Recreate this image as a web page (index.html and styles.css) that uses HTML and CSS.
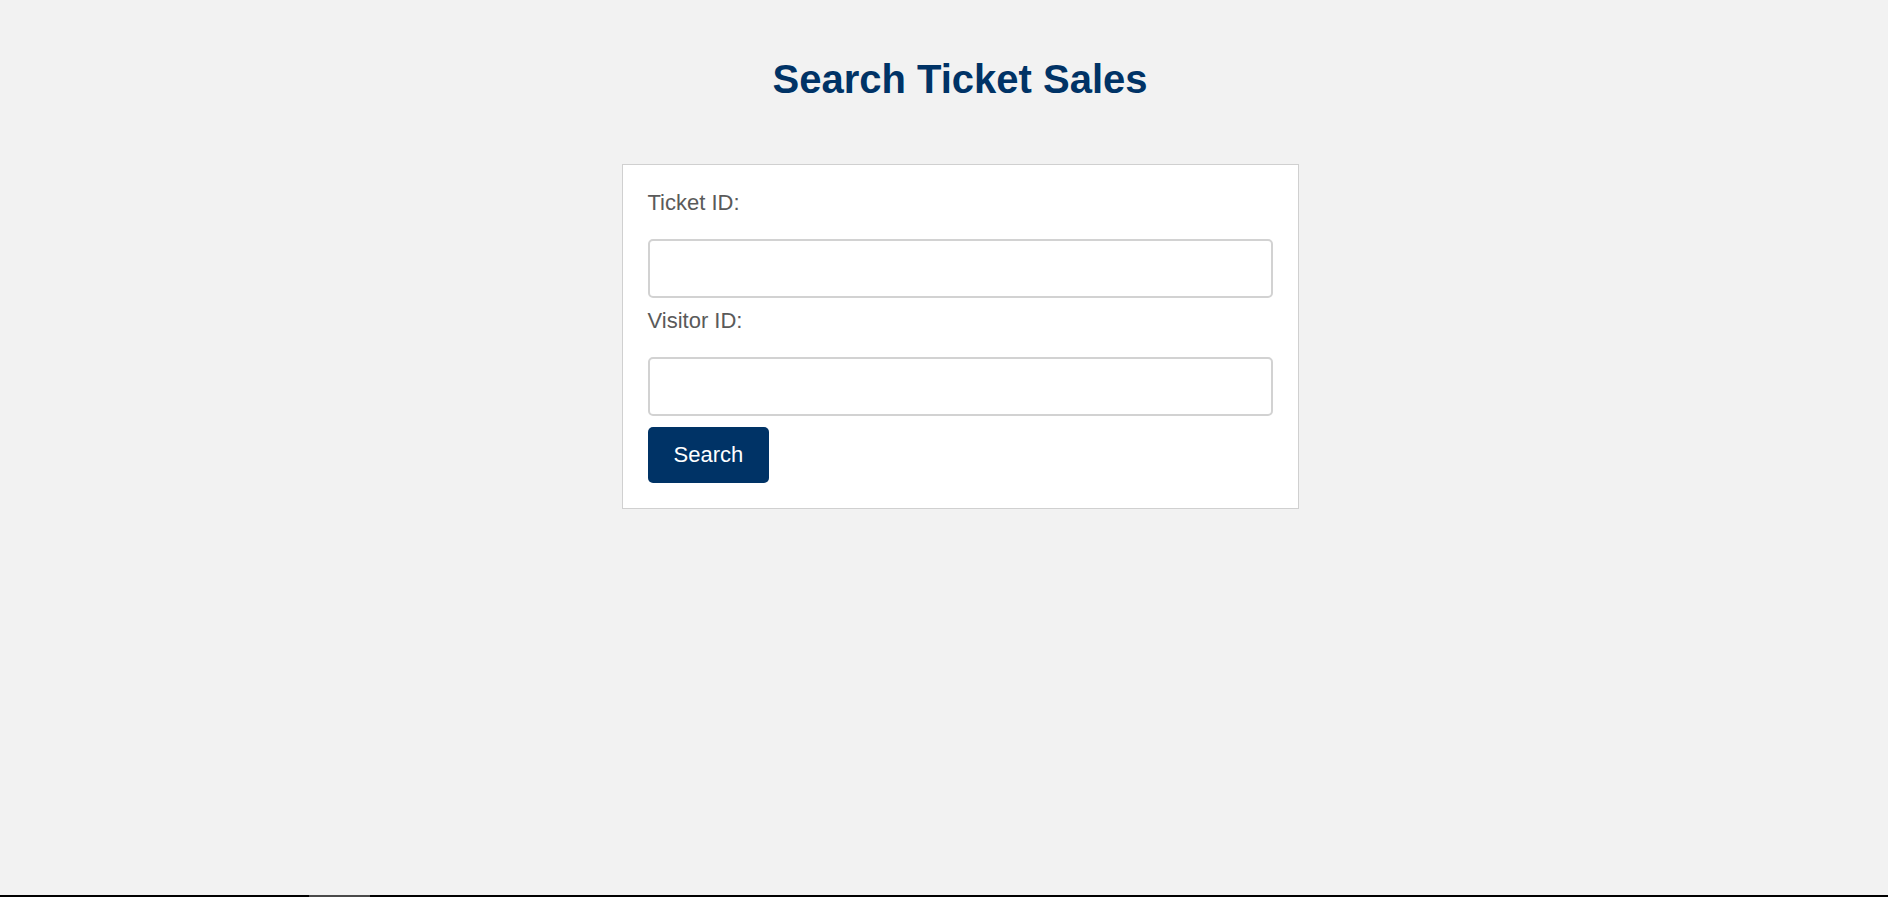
FILE: index.html
```html
<!DOCTYPE html>
<html lang="en">
<head>
<meta charset="utf-8">
<title>Search Ticket Sales</title>
<link rel="stylesheet" href="styles.css">
</head>
<body>
<main class="page">
  <h1 class="title">Search Ticket Sales</h1>
  <form class="card">
    <label class="field-label" for="ticket">Ticket ID:</label>
    <input class="field-input" id="ticket" type="text">
    <label class="field-label" for="visitor">Visitor ID:</label>
    <input class="field-input field-input-last" id="visitor" type="text">
    <button class="search-btn" type="button">Search</button>
  </form>
</main>
<div class="hscroll"><div class="hscroll-thumb"></div></div>
</body>
</html>
```
FILE: styles.css
```css
html, body {
  margin: 0;
  padding: 0;
}
body {
  background: #f2f2f2;
  font-family: "Liberation Sans", Arial, sans-serif;
  min-height: 897px;
}
.page {
  display: flex;
  flex-direction: column;
  align-items: center;
  padding: 56px 0 0 32px;
}
.title {
  margin: 0;
  font-size: 40px;
  line-height: 46px;
  font-weight: bold;
  color: #003366;
}
.card {
  margin-top: 62px;
  box-sizing: border-box;
  width: 677px;
  background: #ffffff;
  border: 1px solid #d0d0d0;
  padding: 25px;
  display: flex;
  flex-direction: column;
  align-items: flex-start;
}
.field-label {
  display: block;
  font-size: 22px;
  line-height: 25px;
  color: #5a5a5a;
  margin-bottom: 24px;
}
.field-input {
  display: block;
  box-sizing: border-box;
  width: 100%;
  height: 59px;
  margin: 0 0 10px 0;
  padding: 0 12px;
  border: 2px solid #d2d2d2;
  border-radius: 5px;
  background: #ffffff;
  font-family: "Liberation Sans", Arial, sans-serif;
  font-size: 22px;
  outline: none;
}
.field-input-last {
  margin-bottom: 11px;
}
.search-btn {
  box-sizing: border-box;
  height: 56px;
  padding: 0 26px;
  border: none;
  border-radius: 5px;
  background: #003366;
  color: #ffffff;
  font-family: "Liberation Sans", Arial, sans-serif;
  font-size: 22px;
  cursor: pointer;
}
.hscroll {
  position: fixed;
  left: 0;
  right: 0;
  bottom: 0;
  height: 2px;
  background: #000000;
}
.hscroll-thumb {
  position: absolute;
  left: 309px;
  width: 61px;
  top: 0;
  height: 2px;
  background: #4a4a4a;
}
```
